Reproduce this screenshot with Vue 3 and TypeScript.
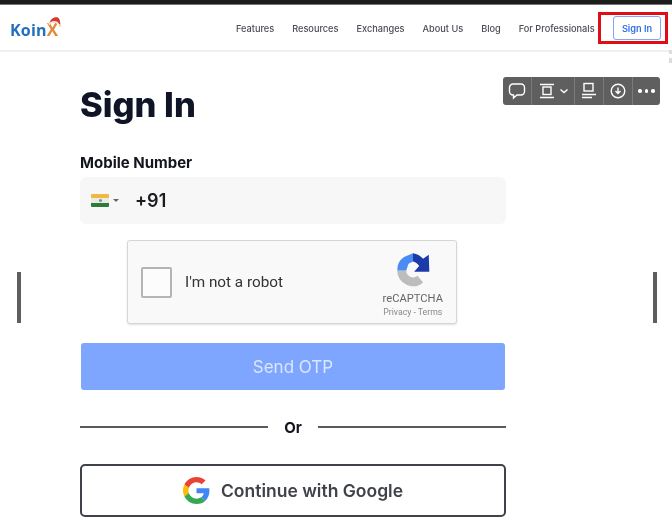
<template>
  <div class="page">
    <div class="topbar"></div>

    <header class="header">
      <div class="logo">
        <span class="logo-k">Koin</span><span class="logo-x">X</span>
        <svg class="hat" viewBox="0 0 22 20" width="15" height="13">
          <path d="M3 12 C4 5 10 1 15 2 C19 3 20 8 20 14 L17 12 C15 9 10 9 3 12 Z" fill="#d8382e" />
          <path d="M2 13 C7 8 13 8 17 12" fill="none" stroke="#f2e6d8" stroke-width="2.8" />
          <circle cx="19.5" cy="15" r="2" fill="#f0dcc8" />
        </svg>
      </div>
      <nav class="nav">
        <a v-for="item in navItems" :key="item">{{ item }}</a>
      </nav>
      <div class="highlight">
        <button class="signin-btn">Sign In</button>
      </div>
    </header>

    <main class="content">
      <h1>Sign In</h1>
      <label class="field-label">Mobile Number</label>
      <div class="phone-input">
        <span class="flag"><i class="saffron"></i><i class="white"><b></b></i><i class="green"></i></span>
        <span class="caret"></span>
        <span class="dial">+91</span>
      </div>

      <div class="captcha">
        <span class="checkbox"></span>
        <span class="captcha-text">I'm not a robot</span>
        <div class="captcha-brand">
          <svg viewBox="0 0 64 64" width="36" height="36">
            <path d="M4 33 A28 28 0 0 0 50 54 L40 42 A12 12 0 0 1 20 33 Z" fill="#bdbdbd" />
            <path d="M4 33 A28 28 0 0 1 16 9 L32 2 L32 17 L24 21 L20 33 Z" fill="#4a8cf3" />
            <path d="M32 2 C40 3 46 7 50 12 L60 5 L61 35 L34 35 L43 25 C40 21 36 17 32 17 Z" fill="#1c3aa9" />
          </svg>
          <span class="brand-name">reCAPTCHA</span>
          <span class="brand-links">Privacy - Terms</span>
        </div>
      </div>

      <button class="otp-btn">Send OTP</button>

      <div class="divider"><span>Or</span></div>

      <button class="google-btn">
        <svg viewBox="0 0 48 48" width="27" height="27">
          <path fill="#EA4335" d="M24 9.5c3.54 0 6.71 1.22 9.21 3.6l6.85-6.85C35.9 2.38 30.47 0 24 0 14.62 0 6.51 5.38 2.56 13.22l7.98 6.19C12.43 13.72 17.74 9.5 24 9.5z" />
          <path fill="#4285F4" d="M46.98 24.55c0-1.57-.15-3.09-.38-4.55H24v9.02h12.94c-.58 2.96-2.26 5.48-4.78 7.18l7.73 6c4.51-4.18 7.09-10.36 7.09-17.65z" />
          <path fill="#FBBC05" d="M10.53 28.59c-.48-1.45-.76-2.99-.76-4.59s.27-3.14.76-4.59l-7.98-6.19C.92 16.46 0 20.12 0 24c0 3.88.92 7.54 2.56 10.78l7.97-6.19z" />
          <path fill="#34A853" d="M24 48c6.48 0 11.93-2.13 15.89-5.81l-7.73-6c-2.15 1.45-4.92 2.3-8.16 2.3-6.26 0-11.57-4.22-13.47-9.91l-7.98 6.19C6.51 42.62 14.62 48 24 48z" />
        </svg>
        <span>Continue with Google</span>
      </button>
    </main>

    <div class="float-toolbar">
      <span class="tool">
        <svg viewBox="0 0 18 18" width="18" height="18"><path d="M5 2h8a3.5 3.5 0 0 1 3.5 3.5v4a3.5 3.5 0 0 1-3.5 3.5H9l-3.5 3v-3H5a3.5 3.5 0 0 1-3.5-3.5v-4A3.5 3.5 0 0 1 5 2z" /></svg>
      </span>
      <span class="tool tool-wide">
        <svg viewBox="0 0 18 18" width="18" height="18"><path d="M2 2.5h14M2 15.5h14" /><rect x="5" y="5" width="8" height="7.5" /></svg>
        <svg viewBox="0 0 10 10" width="10" height="10"><path d="M1.5 3.5l3.5 3 3.5-3" /></svg>
      </span>
      <span class="tool">
        <svg viewBox="0 0 18 18" width="18" height="18"><rect x="4" y="1.5" width="9" height="7.5" /><path d="M2 12.5h14M2 15.5h10" /></svg>
      </span>
      <span class="tool">
        <svg viewBox="0 0 18 18" width="18" height="18"><circle cx="9" cy="9" r="6.8" /><path d="M9 5.5v6M6.5 9L9 11.5 11.5 9" /></svg>
      </span>
      <span class="tool tool-last">
        <span class="dot"></span><span class="dot"></span><span class="dot"></span>
      </span>
    </div>

    <div class="handle handle-left"></div>
    <div class="handle handle-right"></div>
    <div class="edge-mark edge-a"></div>
    <div class="edge-mark edge-b"></div>
  </div>
</template>

<script setup lang="ts">
const navItems: string[] = [
  'Features',
  'Resources',
  'Exchanges',
  'About Us',
  'Blog',
  'For Professionals'
]
</script>

<style>
html,
body {
  margin: 0;
  background: #fff;
  overflow: hidden;
}
</style>

<style scoped>
.page {
  position: relative;
  width: 672px;
  height: 523px;
  overflow: hidden;
  background: #fff;
  font-family: Inter, 'Liberation Sans', sans-serif;
  color: #0f1426;
  filter: blur(0.45px);
}

.topbar {
  height: 5px;
  background: #1c1c1c;
  border-bottom: 1px solid #777;
  box-sizing: border-box;
}

.header {
  display: flex;
  align-items: center;
  height: 47px;
  box-sizing: border-box;
  padding: 0 4px 0 10px;
  border-bottom: 2px solid #efefef;
}

.logo {
  position: relative;
  width: 50px;
  font-family: 'Open Sans', sans-serif;
  font-size: 16px;
  font-weight: 700;
  letter-spacing: 0.2px;
  line-height: 1;
  margin-top: 4px;
  white-space: nowrap;
}

.logo-k {
  color: #2470bd;
}

.logo-x {
  color: #e08a3c;
  font-size: 17px;
}

.hat {
  position: absolute;
  left: 37px;
  top: -5px;
}

.nav {
  display: flex;
  gap: 18px;
  margin-top: 2px;
  margin-left: 176px;
  font-size: 9.2px;
  font-weight: 500;
  color: #4a4d55;
  white-space: nowrap;
}

.highlight {
  display: flex;
  margin-top: 1px;
  margin-left: auto;
  padding: 1px 4px 1px 12px;
  border: 3px solid #de0d16;
}

.signin-btn {
  width: 48px;
  height: 24px;
  padding: 0;
  background: #fff;
  border: 1px solid #7ea6ff;
  border-radius: 3px;
  color: #2f6fe8;
  font-family: inherit;
  font-size: 9.2px;
  font-weight: 600;
}

.content {
  display: flex;
  flex-direction: column;
  width: 426px;
  margin-left: 80px;
}

h1 {
  margin: 31px 0 0;
  font-size: 34.5px;
  font-weight: 800;
  line-height: 44px;
}

.field-label {
  margin-top: 26px;
  font-size: 15px;
  font-weight: 700;
  line-height: 20px;
  color: #14161f;
}

.phone-input {
  display: flex;
  align-items: center;
  height: 47px;
  margin-top: 4px;
  padding-left: 11px;
  background: #f7f7f7;
  border-radius: 6px;
}

.flag {
  display: flex;
  flex-direction: column;
  width: 18px;
  height: 13px;
  overflow: hidden;
  border-radius: 1px;
}

.flag i {
  flex: 1;
  display: flex;
  align-items: center;
  justify-content: center;
}

.saffron {
  background: #efb93f;
}

.white {
  background: #e9ebe6;
}

.white b {
  width: 3px;
  height: 3px;
  border-radius: 50%;
  background: #7d8c9c;
}

.green {
  background: #2f7a35;
}

.caret {
  width: 0;
  height: 0;
  margin-left: 4px;
  border-left: 3px solid transparent;
  border-right: 3px solid transparent;
  border-top: 3px solid #666;
}

.dial {
  margin-left: 16px;
  font-size: 18px;
  font-weight: 600;
  color: #1a1c22;
}

.captcha {
  display: flex;
  align-items: center;
  align-self: flex-start;
  box-sizing: border-box;
  width: 330px;
  height: 84px;
  margin: 16px 0 0 47px;
  padding: 0 13px 0 13px;
  background: #f9f9f9;
  border: 1px solid #d6d6d6;
  border-radius: 3px;
  box-shadow: 0 1px 2px rgba(0, 0, 0, 0.12);
}

.checkbox {
  box-sizing: border-box;
  width: 31px;
  height: 31px;
  background: #fcfcfc;
  border: 2px solid #b4b4b4;
  border-radius: 2px;
}

.captcha-text {
  margin-left: 13px;
  font-family: Roboto, sans-serif;
  font-size: 15.3px;
  color: #333;
}

.captcha-brand {
  display: flex;
  flex-direction: column;
  align-items: center;
  margin-top: 6px;
  margin-left: auto;
  color: #6a6a6a;
  font-family: Roboto, sans-serif;
}

.brand-name {
  margin-top: 4px;
  font-size: 11.2px;
  line-height: 14px;
  color: #666;
}

.brand-links {
  font-size: 8.7px;
  line-height: 12px;
  color: #888;
}

.otp-btn {
  height: 47px;
  margin: 19px 1px 0;
  padding: 0;
  background: #7ea6ff;
  border: none;
  border-radius: 3px;
  color: #dbe6ff;
  font-family: inherit;
  font-size: 17px;
  font-weight: 400;
}

.divider {
  display: flex;
  align-items: center;
  gap: 16px;
  height: 20px;
  margin-top: 27px;
  font-size: 15px;
  font-weight: 700;
  color: #14161f;
}

.divider::before,
.divider::after {
  content: '';
  flex: 1;
  height: 2px;
  background: #5a5a5a;
}

.google-btn {
  display: flex;
  align-items: center;
  justify-content: center;
  gap: 11px;
  box-sizing: border-box;
  height: 53px;
  margin-top: 27px;
  padding: 0;
  background: #fff;
  border: 2px solid #3f4249;
  border-radius: 5px;
  color: #3f4249;
  font-family: inherit;
  font-size: 17.5px;
  font-weight: 600;
}

.float-toolbar {
  position: absolute;
  left: 503px;
  top: 77px;
  display: flex;
  height: 28px;
  background: #5f5f5f;
  border-radius: 3px;
}

.tool {
  display: flex;
  align-items: center;
  justify-content: center;
  gap: 3px;
  width: 29px;
  border-right: 1px solid #7b7b7b;
  box-sizing: border-box;
}

.tool-wide {
  width: 43px;
}

.tool-last {
  width: 27px;
  border-right: none;
}

.tool svg {
  fill: none;
  stroke: #fff;
  stroke-width: 1.4;
}

.dot {
  width: 3.5px;
  height: 3.5px;
  border-radius: 50%;
  background: #fff;
}

.handle {
  position: absolute;
  top: 272px;
  width: 4px;
  height: 51px;
  background: #5e5e5e;
}

.handle-left {
  left: 17px;
}

.handle-right {
  left: 653px;
}

.edge-mark {
  position: absolute;
  left: 669px;
  width: 3px;
  background: #dcdcdc;
}

.edge-a {
  top: 50px;
  height: 4px;
}

.edge-b {
  top: 58px;
  height: 5px;
}
</style>
